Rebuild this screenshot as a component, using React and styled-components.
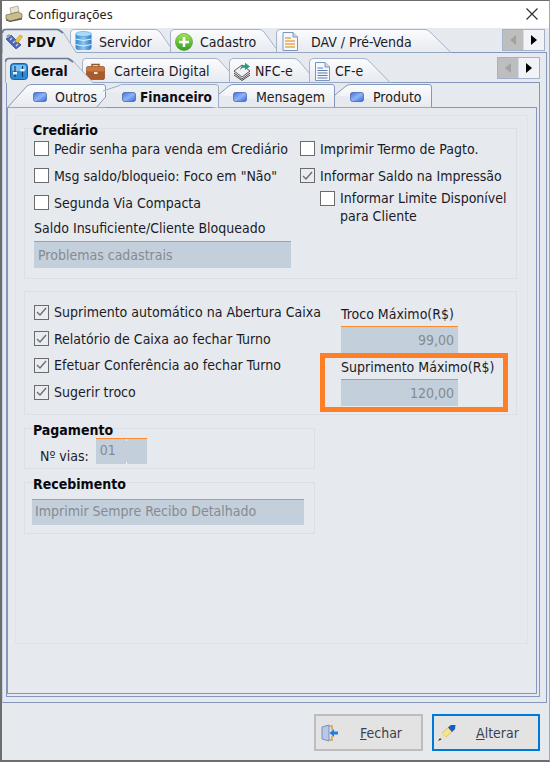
import React from "react"
import styled, { createGlobalStyle } from "styled-components"

const body_bg = "#e6eaef"
const line_blue = "#8497ba"
const line_faint = "#dcdfe3"
const text_color = "#1b1b26"
const field_bg = "#c3cfdb"
const font_stack = `"DejaVu Sans Condensed", "DejaVu Sans", "Noto Sans", sans-serif`

const GlobalStyle = createGlobalStyle`
  html, body {
    margin: 0;
    padding: 0;
    background: ${body_bg};
  }
  * {
    box-sizing: border-box;
  }
`

const Window = styled.div`
  width: 550px;
  height: 762px;
  display: flex;
  flex-direction: column;
  overflow: hidden;
  background: ${body_bg};
  border-top: 1px solid #6d6d6d;
  border-left: 2px solid #6d6d6d;
  border-right: 1px solid #a8a8a8;
  border-bottom: 2px solid #6d6d6d;
  font-family: ${font_stack};
  font-size: 14px;
  color: ${text_color};
`

const TitleBar = styled.div`
  height: 27px;
  flex: none;
  display: flex;
  align-items: center;
  gap: 4px;
  padding: 0 11px 1px 2px;
  background: #fff;
  font-family: "Noto Sans", sans-serif;
  font-size: 12.5px;
  color: #222;
`

const TitleText = styled.span`
  flex: 1;
`

const TabRow = styled.div`
  position: relative;
  z-index: 2;
  flex: none;
  display: flex;
  height: ${(p) => p.$height}px;
  margin-bottom: -1px;
`

const TabItem = styled.div`
  position: relative;
  z-index: ${(p) => (p.$active ? 3 : 1)};
  flex: none;
  display: flex;
  align-items: center;
  width: ${(p) => p.$width}px;
  margin-left: ${(p) => p.$left}px;
  padding: 2px 0 0 ${(p) => p.$pad}px;
  gap: ${(p) => p.$gap}px;
  font-size: ${(p) => (p.$active ? 13.5 : 14)}px;
  font-weight: ${(p) => (p.$active ? 700 : 400)};
  color: ${(p) => (p.$active ? "#0d0d14" : text_color)};
  white-space: nowrap;

  > span,
  > svg:not(:first-child) {
    position: relative;
  }
`

const TabOutline = styled.svg`
  position: absolute;
  left: 0;
  top: 0;
`

const ScrollPair = styled.div`
  display: flex;
  align-self: flex-start;
  flex: none;
  width: 43px;
  height: 22px;
  margin-left: auto;
  margin-right: ${(p) => p.$right}px;
  margin-top: ${(p) => p.$top}px;
  border: 1px solid #a3b2c9;
`

const ScrollHalf = styled.div`
  flex: 1;
  display: flex;
  align-items: center;
  justify-content: center;
  background: ${(p) => (p.$off ? "#bebebe" : "#f1f3f6")};
  border-right: ${(p) => (p.$off ? "1px solid #d8dce2" : "none")};
`

const Arrow = styled.i`
  width: 0;
  height: 0;
  border-top: 5px solid transparent;
  border-bottom: 5px solid transparent;
  border-left: ${(p) => (p.$dir === "right" ? "6px solid #000" : "none")};
  border-right: ${(p) => (p.$dir === "left" ? "6px solid #a2a2a2" : "none")};
`

const OuterPanel = styled.div`
  flex: none;
  width: 545px;
  height: 651px;
  display: flex;
  flex-direction: column;
  padding: 4px 6px 5px 2px;
  border: 1px solid ${line_blue};
  border-left-color: #c5cfdf;
`

const MiddlePanel = styled.div`
  flex: 1;
  display: flex;
  flex-direction: column;
  margin-left: 1px;
  padding: 1px 2px 2px 0;
  border: 1px solid ${line_blue};
`

const InnerPanel = styled.div`
  flex: 1;
  padding: 7px 8px 0 7px;
  border: 1px solid ${line_blue};
`

const PageBox = styled.div`
  height: 529px;
  padding: 12px 0 0 8px;
  border: 1px solid #e0e3e7;
  width: 513px;
`

const Group = styled.div`
  width: ${(p) => p.$width}px;
  height: ${(p) => p.$height}px;
  margin-bottom: ${(p) => p.$gap || 13}px;
  padding: 0 9px;
  border: 1px solid ${line_faint};
`

const GroupTitle = styled.div`
  height: 16px;
  margin: -7px 0 -3px -1px;
  font-weight: 700;
  line-height: 16px;
  color: #08080e;
`

const TwoColumns = styled.div`
  display: flex;
`

const Column = styled.div`
  flex: none;
  width: ${(p) => p.$width}px;
  margin-top: ${(p) => p.$top || 0}px;
`

const CheckRow = styled.label`
  display: flex;
  align-items: ${(p) => (p.$multi ? "flex-start" : "center")};
  gap: 5px;
  height: ${(p) => p.$height || 27}px;
  margin-left: ${(p) => p.$indent || 0}px;
  line-height: 18px;
  white-space: pre-line;
`

const Box = styled.span`
  flex: none;
  display: flex;
  align-items: center;
  justify-content: center;
  width: 15px;
  height: 15px;
  margin-top: ${(p) => (p.$multi ? 2 : 0)}px;
  background: ${(p) => (p.$checked ? "#e9ecf0" : "#fff")};
  border: 1.5px solid #6b6b6b;
`

const FieldLabel = styled.div`
  height: ${(p) => p.$height}px;
  margin-top: ${(p) => p.$top || 0}px;
  padding-top: ${(p) => p.$nudge || 0}px;
  line-height: ${(p) => p.$height}px;
  white-space: nowrap;
`

const Field = styled.div`
  position: relative;
  flex: none;
  width: ${(p) => p.$width}px;
  height: ${(p) => p.$height || 27}px;
  margin-top: ${(p) => p.$top || 0}px;
  margin-left: ${(p) => p.$shift || 0}px;
  padding: ${(p) => (p.$high ? "1px" : "3px")} 4px 0 ${(p) => p.$inset || 4}px;
  background: ${field_bg};
  border-top: 1px solid #fb8a2e;
  color: #868b93;
  line-height: 21px;
  text-align: ${(p) => (p.$right ? "right" : "left")};
  white-space: nowrap;
`

// the two small white marks inside the spin field
const FieldMark = styled.i`
  position: absolute;
  left: 30px;
  top: ${(p) => p.$top}px;
  width: 1px;
  height: 2px;
  background: #f4f6f8;
`

const HighlightAnchor = styled.div`
  position: relative;
`

const Highlight = styled.div`
  position: absolute;
  left: -21px;
  top: 49px;
  width: 188px;
  height: 59px;
  border: 5px solid #ff7f27;
`

const ViasRow = styled.div`
  display: flex;
  align-items: flex-end;
  gap: 7px;
  margin-top: 3px;
  padding-left: 6px;
`

const ViasLabel = styled.span`
  line-height: 16px;
`

const Footer = styled.div`
  flex: 1;
  display: flex;
  justify-content: flex-end;
  gap: 9px;
  padding: 11px 9px 0 0;
`

const Button = styled.button`
  display: flex;
  align-items: center;
  width: ${(p) => (p.$focused ? 108 : 109)}px;
  height: 37px;
  padding: 0 0 0 ${(p) => (p.$focused ? 3 : 5)}px;
  gap: ${(p) => (p.$focused ? 20 : 21)}px;
  background: #e3e3e3;
  border: ${(p) => (p.$focused ? "2.5px solid #0078d7" : "2px solid #bdbdbd")};
  font-family: ${font_stack};
  font-size: 14px;
  color: #3a4252;
  u {
    text-decoration: underline;
  }
`

const PrinterIcon = () => (
  <svg width="20" height="18" viewBox="0 0 20 18">
    <path d="M6 3 L14 1 L15 7 L7 9 Z" fill="#e8e4d0" stroke="#8a8a7a" strokeWidth=".6" />
    <path d="M2 10 L14 7 L18 9 L18 13 L6 16 L2 14 Z" fill="#c9bd8c" stroke="#6f6a50" strokeWidth=".7" />
    <path d="M2 14 L6 16 L18 13 L18 14.5 L6 17 L2 15.5 Z" fill="#55524a" />
  </svg>
)

const CloseIcon = () => (
  <svg width="12" height="12" viewBox="0 0 12 12">
    <path d="M.5 .5 L11.5 11.5 M11.5 .5 L.5 11.5" stroke="#2b2b2b" strokeWidth="1.1" />
  </svg>
)

const ToolsIcon = () => (
  <svg width="18" height="18" viewBox="0 0 18 18">
    <path d="M1 6 L6 2 L16 12 L11 16 Z" fill="#4b68b8" stroke="#2f4280" strokeWidth=".7" />
    <path d="M5 7 L7 5 M8 10 L10 8 M11 13 L13 11" stroke="#c8d4f0" strokeWidth="1.2" />
    <path d="M10 8 L15 2 L17.5 3.5 L13 10 Z" fill="#f0c53a" stroke="#a78418" strokeWidth=".5" />
    <path d="M1 3 L4 1 L6 3 L3 5 Z" fill="#9aa2b0" />
  </svg>
)

const DatabaseIcon = () => (
  <svg width="17" height="21" viewBox="0 0 17 21">
    <defs>
      <linearGradient id="db_fill" x1="0" x2="1" y1="0" y2="0">
        <stop offset="0" stopColor="#2f86cf" />
        <stop offset=".5" stopColor="#8cc8f0" />
        <stop offset="1" stopColor="#2a78c0" />
      </linearGradient>
    </defs>
    <rect x="0.5" y="2" width="16" height="17" rx="3" fill="url(#db_fill)" />
    <ellipse cx="8.5" cy="3" rx="8" ry="2.5" fill="#a9dcf7" stroke="#3c8ccb" strokeWidth=".5" />
    <path d="M.5 8 Q8.5 11 16.5 8 M.5 13.5 Q8.5 16.5 16.5 13.5" stroke="#e2f2fc" fill="none" />
  </svg>
)

const PlusIcon = () => (
  <svg width="18" height="18" viewBox="0 0 18 18">
    <defs>
      <linearGradient id="plus_fill" x1="0" x2="0" y1="0" y2="1">
        <stop offset="0" stopColor="#a8e45a" />
        <stop offset="1" stopColor="#2fa01e" />
      </linearGradient>
    </defs>
    <circle cx="9" cy="9" r="8.5" fill="url(#plus_fill)" stroke="#3f8f22" strokeWidth=".6" />
    <path d="M9 4 V14 M4 9 H14" stroke="#fff" strokeWidth="2.6" />
  </svg>
)

const ColorDocIcon = () => (
  <svg width="16" height="19" viewBox="0 0 16 19">
    <path d="M1 .5 H11 L15.5 5 V18.5 H1 Z" fill="#f6f8fb" stroke="#7d95b8" />
    <path d="M11 .5 V5 H15.5" fill="#cfdbea" stroke="#7d95b8" />
    <path d="M3 6 H9 M3 9 H13 M3 12 H13 M3 15 H13" stroke="#e8a850" strokeWidth="1.4" />
  </svg>
)

const SlidersIcon = () => (
  <svg width="18" height="17" viewBox="0 0 18 17">
    <rect x=".5" y=".5" width="17" height="16" rx="3" fill="#2c8ad8" stroke="#1c5f9e" />
    <rect x="2" y="2" width="14" height="6" rx="2" fill="#7cc0f0" />
    <path d="M5 3 V14 M12.5 3 V14" stroke="#0f3c6c" strokeWidth="1.2" />
    <rect x="3" y="9" width="4" height="2.4" fill="#eaf4fc" />
    <rect x="10.5" y="6" width="4" height="2.4" fill="#eaf4fc" />
  </svg>
)

const BriefcaseIcon = () => (
  <svg width="19" height="17" viewBox="0 0 19 17">
    <path d="M6 4 V1.5 H13 V4" fill="none" stroke="#8b5a2b" strokeWidth="1.4" />
    <rect x=".5" y="3.5" width="18" height="13" rx="1.5" fill="#a9592a" stroke="#7a3c18" strokeWidth=".6" />
    <rect x=".5" y="3.5" width="18" height="5" rx="1.5" fill="#c9783f" />
    <rect x="8" y="9" width="3.5" height="2" fill="#f3e7d2" />
  </svg>
)

const PaperStackIcon = () => (
  <svg width="18" height="19" viewBox="0 0 18 19">
    <path d="M1 9 L9 3 L17 9 L9 15 Z" fill="#f2f2f2" stroke="#333" strokeWidth=".8" />
    <path d="M1 11 L9 17 L17 11 M1 13 L9 18.5 L17 13" fill="none" stroke="#333" strokeWidth=".9" />
    <path d="M7 8 Q8 3 12 3 V.8 L17 4.5 L12 8 V5.6 Q9 5.6 7 8 Z" fill="#2c9a83" />
  </svg>
)

const BlueDocIcon = () => (
  <svg width="15" height="19" viewBox="0 0 15 19">
    <path d="M.5 .5 H10 L14.5 5 V18.5 H.5 Z" fill="#f4f7fb" stroke="#7d95b8" />
    <path d="M10 .5 V5 H14.5" fill="#cfdbea" stroke="#7d95b8" />
    <path d="M2.5 6 H8 M2.5 8.5 H12.5 M2.5 11 H12.5 M2.5 13.5 H12.5 M2.5 16 H12.5" stroke="#5a7cb4" strokeWidth="1.2" />
  </svg>
)

const SmallTabIcon = () => (
  <svg width="14" height="10" viewBox="0 0 14 10">
    <defs>
      <linearGradient id="small_tab_fill" x1="0" x2="1" y1="0" y2="1">
        <stop offset="0" stopColor="#3f6fe0" />
        <stop offset=".5" stopColor="#8fb4f5" />
        <stop offset="1" stopColor="#3566d8" />
      </linearGradient>
    </defs>
    <rect x=".5" y=".5" width="13" height="9" rx="2" fill="url(#small_tab_fill)" stroke="#3a5aa8" strokeWidth=".7" />
  </svg>
)

const DoorIcon = () => (
  <svg width="18" height="18" viewBox="0 0 18 18">
    <path d="M1 3 L8 1 V17 L1 15 Z" fill="#b9c8ea" stroke="#6a7ba8" strokeWidth=".8" />
    <path d="M8 2 H11 V6 M11 12 V16 H8" fill="none" stroke="#d0a23c" strokeWidth="1.4" />
    <path d="M17 7.5 H13 V5 L8.5 9 L13 13 V10.5 H17 Z" fill="#1d7fe0" />
  </svg>
)

const PencilIcon = () => (
  <svg width="19" height="18" viewBox="0 0 19 18">
    <path d="M5 9 L14 1 L18 5 L9 13 Z" fill="#f4e48a" stroke="#b69c3c" strokeWidth=".5" />
    <path d="M11 3.5 L14 1 L18.5 1 L18 5 L15 8 Z" fill="#1f58c8" />
    <path d="M5 9 L9 13 L1 17 Z" fill="#e8e2c8" />
    <path d="M3 14 L4.5 15.5 L1 17 Z" fill="#333" />
  </svg>
)

const CheckMark = () => (
  <svg width="11" height="10" viewBox="0 0 11 10">
    <path d="M1 5 L4 8 L10 1" fill="none" stroke="#6e6e6e" strokeWidth="1.4" />
  </svg>
)

// outline of one tab, computed from its size: right slant, left slant or short left corner
const tab_path = (kind, w, h, s) => {
  if (kind === "right") {
    return `M.5 ${h} L.5 5 Q.5 1.5 4 1.5 L${w - s - 3} 1.5 Q${w - s} 1.5 ${w - s + 2} 4 L${w - 0.5} ${h}`
  }
  if (kind === "outros") {
    return `M0 ${h} L${s - 2} 2 Q${s} .5 ${s + 3} .5 L${w - 3} .5 Q${w - 0.5} .5 ${w - 0.5} 3 L${w - 0.5} ${h - 11} L${w - 10} ${h}`
  }
  return `M0 ${h - s + 0} L${s - 2} 2 Q${s} .5 ${s + 3} .5 L${w - 3} .5 Q${w - 0.5} .5 ${w - 0.5} 3 L${w - 0.5} ${h}`
}

const Tab = ({ kind, width, height, slant, left, pad, gap, active, icon, label }) => {
  const d = tab_path(kind, width, height, slant)
  const stroke = kind === "right" ? "#a6b3ca" : "#8497ba"
  return (
    <TabItem $width={width} $left={left} $pad={pad} $gap={gap} $active={active}>
      <TabOutline width={width} height={height} viewBox={`0 0 ${width} ${height}`}>
        <defs>
          <linearGradient id="tab_fill" x1="0" x2="0" y1="0" y2="1">
            <stop offset="0" stopColor="#fbfcfd" />
            <stop offset="1" stopColor="#e6e9f0" />
          </linearGradient>
        </defs>
        <path d={`${d} Z`} fill={active ? (kind === "right" ? body_bg : "#ebeef2") : "url(#tab_fill)"} />
        <path d={d} fill="none" stroke={active && kind !== "right" ? "#9eadc6" : stroke} />
        {active && kind === "right" && (
          <path d={`M.5 5 Q.5 1.5 4 1.5 L${width - slant - 3} 1.5 L${width - slant + 2} 5`} fill="none" stroke="#6c7a92" strokeWidth="1.6" />
        )}
        {!active && <path d={`M0 ${height - 0.5} H${width}`} stroke="#97a8c4" />}
      </TabOutline>
      {icon}
      <span>{label}</span>
    </TabItem>
  )
}

const Scroller = ({ right, top }) => (
  <ScrollPair $right={right} $top={top}>
    <ScrollHalf $off>
      <Arrow $dir="left" />
    </ScrollHalf>
    <ScrollHalf>
      <Arrow $dir="right" />
    </ScrollHalf>
  </ScrollPair>
)

const Check = ({ label, checked, multi, indent, height }) => (
  <CheckRow $multi={multi} $indent={indent} $height={height}>
    <Box $checked={checked} $multi={multi}>
      {checked && <CheckMark />}
    </Box>
    <span>{label}</span>
  </CheckRow>
)

const main_tabs = [
  { label: "PDV", icon: <ToolsIcon />, width: 75, slant: 16, left: 0, pad: 3, gap: 4, active: true },
  { label: "Servidor", icon: <DatabaseIcon />, width: 105, slant: 17, left: -7, pad: 5, gap: 7 },
  { label: "Cadastro", icon: <PlusIcon />, width: 110, slant: 18, left: -5, pad: 5, gap: 7 },
  { label: "DAV / Pré-Venda", icon: <ColorDocIcon />, width: 176, slant: 24, left: -4, pad: 6, gap: 13 },
]

const sub_tabs = [
  { label: "Geral", icon: <SlidersIcon />, width: 89, slant: 23, left: 0, pad: 5, gap: 3, active: true },
  { label: "Carteira Digital", icon: <BriefcaseIcon />, width: 158, slant: 22, left: -12, pad: 4, gap: 9 },
  { label: "NFC-e", icon: <PaperStackIcon />, width: 89, slant: 21, left: -11, pad: 4, gap: 4 },
  { label: "CF-e", icon: <BlueDocIcon />, width: 82, slant: 24, left: -9, pad: 6, gap: 5 },
]

const page_tabs = [
  { label: "Outros", kind: "outros", width: 99, slant: 22, left: 0, pad: 26, gap: 8 },
  { label: "Financeiro", kind: "left", width: 116, slant: 17, left: -3, pad: 19, gap: 4, active: true },
  { label: "Mensagem", kind: "short", width: 117, slant: 13, left: -1, pad: 15, gap: 9 },
  { label: "Produto", kind: "short", width: 97, slant: 13, left: 0, pad: 15, gap: 9 },
]

const App = () => {
  return (
    <>
      <GlobalStyle />
      <Window>
        <TitleBar>
          <PrinterIcon />
          <TitleText>Configurações</TitleText>
          <CloseIcon />
        </TitleBar>

        <TabRow $height={25}>
          {main_tabs.map((t) => (
            <Tab key={t.label} kind="right" height={25} {...t} />
          ))}
          <Scroller right={4} top={1} />
        </TabRow>

        <OuterPanel>
          <TabRow $height={26}>
            {sub_tabs.map((t) => (
              <Tab key={t.label} kind="right" height={26} {...t} />
            ))}
            <Scroller right={0} top={0} />
          </TabRow>

          <MiddlePanel>
            <TabRow $height={24}>
              {page_tabs.map((t) => (
                <Tab key={t.label} height={24} icon={<SmallTabIcon />} {...t} />
              ))}
            </TabRow>

            <InnerPanel>
              <PageBox>
                <Group $width={493} $height={151} $gap={12}>
                  <GroupTitle>Crediário</GroupTitle>
                  <TwoColumns>
                    <Column $width={266}>
                      <Check label="Pedir senha para venda em Crediário" />
                      <Check label={'Msg saldo/bloqueio: Foco em "Não"'} />
                      <Check label="Segunda Via Compacta" />
                      <FieldLabel $height={22} $nudge={1}>Saldo Insuficiente/Cliente Bloqueado</FieldLabel>
                      <Field $width={257} $top={3}>Problemas cadastrais</Field>
                    </Column>
                    <Column $width={210}>
                      <Check label="Imprimir Termo de Pagto." />
                      <Check label="Informar Saldo na Impressão" checked />
                      <Check label={"Informar Limite Disponível\npara Cliente"} multi indent={20} height={40} />
                    </Column>
                  </TwoColumns>
                </Group>

                <Group $width={493} $height={124}>
                  <TwoColumns>
                    <Column $width={307} $top={7}>
                      <Check label="Suprimento automático na Abertura Caixa" height={26.6} checked />
                      <Check label="Relatório de Caixa ao fechar Turno" height={26.6} checked />
                      <Check label="Efetuar Conferência ao fechar Turno" height={26.6} checked />
                      <Check label="Sugerir troco" height={26.6} checked />
                    </Column>
                    <Column $width={118} $top={12}>
                      <HighlightAnchor>
                        <FieldLabel $height={20}>Troco Máximo(R$)</FieldLabel>
                        <Field $width={117} $top={2} $right>99,00</Field>
                        <FieldLabel $height={20} $top={4}>Suprimento Máximo(R$)</FieldLabel>
                        <Field $width={117} $top={2} $right>120,00</Field>
                        <Highlight />
                      </HighlightAnchor>
                    </Column>
                  </TwoColumns>
                </Group>

                <Group $width={291} $height={41}>
                  <GroupTitle>Pagamento</GroupTitle>
                  <ViasRow>
                    <ViasLabel>Nº vias:</ViasLabel>
                    <Field $width={51} $height={26} $high>
                      01
                      <FieldMark $top={0} />
                      <FieldMark $top={23} />
                    </Field>
                  </ViasRow>
                </Group>

                <Group $width={291} $height={52}>
                  <GroupTitle>Recebimento</GroupTitle>
                  <Field $width={272} $height={26} $top={10} $shift={-2} $high $inset={3}>
                    Imprimir Sempre Recibo Detalhado
                  </Field>
                </Group>
              </PageBox>
            </InnerPanel>
          </MiddlePanel>
        </OuterPanel>

        <Footer>
          <Button>
            <DoorIcon />
            <span><u>F</u>echar</span>
          </Button>
          <Button $focused>
            <PencilIcon />
            <span><u>A</u>lterar</span>
          </Button>
        </Footer>
      </Window>
    </>
  )
}

export default App
